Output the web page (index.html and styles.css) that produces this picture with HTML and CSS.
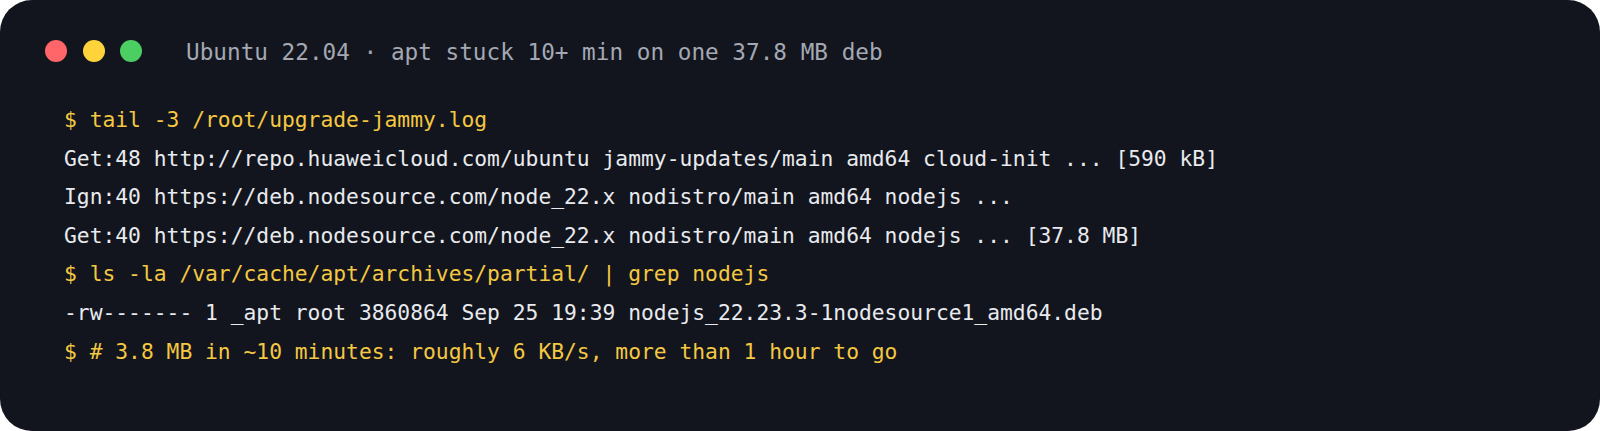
FILE: index.html
```html
<!DOCTYPE html>
<html>
<head>
<meta charset="utf-8">
<link rel="stylesheet" href="styles.css">
</head>
<body>
<div class="term">
  <div class="bar">
    <div class="dots">
      <span class="dot red"></span>
      <span class="dot yellow"></span>
      <span class="dot green"></span>
    </div>
    <div class="title">Ubuntu 22.04 · apt stuck 10+ min on one 37.8 MB deb</div>
  </div>
  <div class="output">
    <div class="line cmd">$ tail -3 /root/upgrade-jammy.log</div>
    <div class="line">Get:48 http://repo.huaweicloud.com/ubuntu jammy-updates/main amd64 cloud-init ... [590 kB]</div>
    <div class="line">Ign:40 https://deb.nodesource.com/node_22.x nodistro/main amd64 nodejs ...</div>
    <div class="line">Get:40 https://deb.nodesource.com/node_22.x nodistro/main amd64 nodejs ... [37.8 MB]</div>
    <div class="line cmd">$ ls -la /var/cache/apt/archives/partial/ | grep nodejs</div>
    <div class="line">-rw------- 1 _apt root 3860864 Sep 25 19:39 nodejs_22.23.3-1nodesource1_amd64.deb</div>
    <div class="line cmd">$ # 3.8 MB in ~10 minutes: roughly 6 KB/s, more than 1 hour to go</div>
  </div>
</div>
</body>
</html>
```
FILE: styles.css
```css
html, body {
  margin: 0;
  padding: 0;
  background: #ffffff;
}
.term {
  box-sizing: border-box;
  width: 1600px;
  height: 431px;
  background: #12151d;
  border-radius: 32px;
  padding: 40px 0 0 45px;
  font-family: "DejaVu Sans Mono", "Liberation Mono", monospace;
}
.bar {
  display: flex;
  align-items: center;
  height: 22px;
}
.dots {
  display: flex;
  gap: 15.5px;
}
.dot {
  width: 22px;
  height: 22px;
  border-radius: 50%;
  display: block;
}
.red { background: #ff6669; }
.yellow { background: #ffd43b; }
.green { background: #4ccf62; }
.title {
  margin-left: 44px;
  padding-top: 2px;
  color: #a3a8b3;
  font-size: 22.7px;
  line-height: 22px;
  white-space: pre;
}
.output {
  margin-top: 39px;
  padding-left: 19px;
  font-size: 21.3px;
  line-height: 38.6px;
  color: #e8eaee;
}
.line {
  white-space: pre;
}
.cmd {
  color: #f4c842;
}
```
